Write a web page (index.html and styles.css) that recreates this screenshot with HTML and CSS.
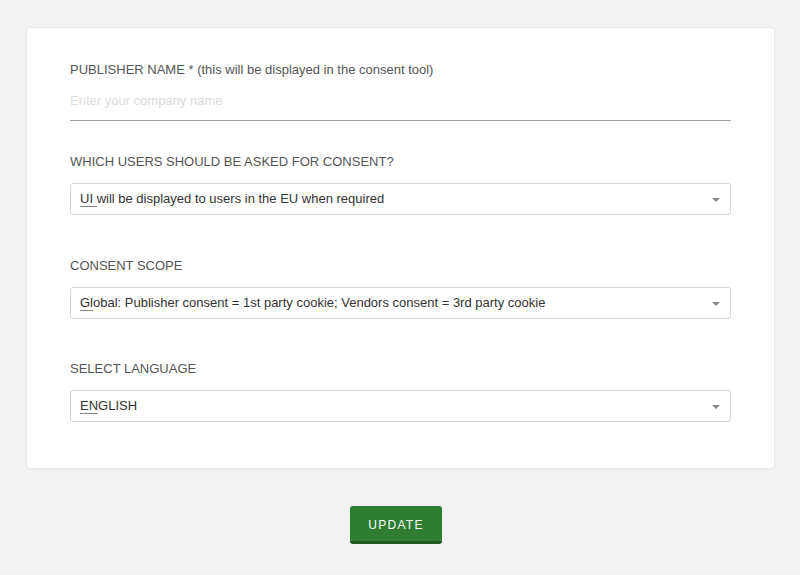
FILE: index.html
```html
<!DOCTYPE html>
<html>
<head>
<meta charset="utf-8">
<link rel="stylesheet" href="styles.css">
</head>
<body>
<div class="page">
  <div class="card">
    <div class="field first">
      <div class="label">PUBLISHER NAME * (this will be displayed in the consent tool)</div>
      <div class="text-input"><span class="placeholder">Enter your company name</span></div>
    </div>
    <div class="field">
      <div class="label">WHICH USERS SHOULD BE ASKED FOR CONSENT?</div>
      <div class="select"><span class="value"><span class="hl">UI&nbsp;</span>will be displayed to users in the EU when required</span><span class="arrow"></span></div>
    </div>
    <div class="field">
      <div class="label">CONSENT SCOPE</div>
      <div class="select"><span class="value"><span class="hl">Gl</span>obal: Publisher consent = 1st party cookie; Vendors consent = 3rd party cookie</span><span class="arrow"></span></div>
    </div>
    <div class="field last">
      <div class="label">SELECT LANGUAGE</div>
      <div class="select"><span class="value"><span class="hl">EN</span>GLISH</span><span class="arrow"></span></div>
    </div>
  </div>
  <div class="actions">
    <button class="btn">UPDATE</button>
  </div>
</div>
</body>
</html>
```

FILE: styles.css
```css
html, body {
  margin: 0;
  padding: 0;
  background: #f3f3f3;
  font-family: "Liberation Sans", Arial, sans-serif;
}
.page {
  padding: 27px 25px 0 26px;
}
.card {
  background: #fff;
  border: 1px solid #e8e8e8;
  border-radius: 4px;
  box-shadow: 0 1px 2px rgba(0,0,0,0.04);
  padding: 34px 43px 46px 43px;
}
.field {
  margin-top: 33px;
}
.field.first {
  margin-top: 0;
}
.field + .field + .field {
  margin-top: 43px;
}
.field + .field + .field.last {
  margin-top: 42px;
}
.label {
  font-size: 13px;
  line-height: 15px;
  color: #555;
}
.text-input {
  margin-top: 16px;
  height: 27px;
  border-bottom: 1px solid #9e9e9e;
  font-size: 13px;
  line-height: 15px;
}
.placeholder {
  color: #dcdcdc;
}
.field:not(.first) .label {
  margin-bottom: 14px;
}
.select {
  display: flex;
  align-items: center;
  justify-content: space-between;
  height: 30px;
  border: 1px solid #d4d4d4;
  border-radius: 3px;
  padding: 0 10px 0 9px;
  font-size: 13px;
  color: #333;
}
.hl {
  border-bottom: 1px solid #888;
  line-height: 14px;
  display: inline-block;
}
.arrow {
  width: 0;
  height: 0;
  border-left: 4px solid transparent;
  border-right: 4px solid transparent;
  border-top: 4px solid #888;
  margin-top: 2px;
}
.actions {
  display: flex;
  justify-content: center;
  margin-top: 37px;
}
.btn {
  width: 92px;
  height: 38px;
  background: #2e7d32;
  border: none;
  border-bottom: 3px solid #205a24;
  border-radius: 3px;
  color: #fff;
  font-family: "Liberation Sans", Arial, sans-serif;
  font-size: 12px;
  letter-spacing: 1.3px;
  padding: 2px 0 0 0;
  margin-right: 9px;
}
```
